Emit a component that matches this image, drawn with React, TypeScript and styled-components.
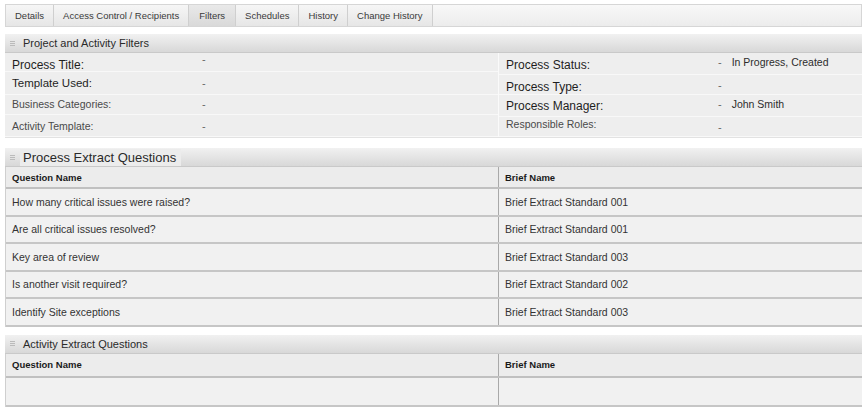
import React from "react";
import styled, { createGlobalStyle } from "styled-components";

const GlobalStyle = createGlobalStyle`
  html, body {
    margin: 0;
    padding: 0;
    background: #ffffff;
    font-family: "Liberation Sans", Arial, sans-serif;
  }
`;

const Page = styled.div`
  width: 863px;
  height: 410px;
  box-sizing: border-box;
  padding: 4px 1px 0 5px;
  display: flex;
  flex-direction: column;
  overflow: hidden;
`;

// Tab strip
const TabBar = styled.div`
  display: flex;
  height: 23px;
  border: 1px solid #d6d6d6;
  background: linear-gradient(#f8f8f8, #ececec);
  box-sizing: border-box;
`;

const Tab = styled.div<{ $active?: boolean }>`
  display: flex;
  align-items: center;
  padding: 0 ${(p) => (p.$active ? "10px" : "9px")};
  font-size: 9.5px;
  color: #3a3a3a;
  border-right: 1px solid #cfcfcf;
  background: ${(p) =>
    p.$active ? "linear-gradient(#e9e9e9, #d9d9d9)" : "linear-gradient(#f6f6f6, #e6e6e6)"};
  white-space: nowrap;
`;

const Section = styled.div<{ $gap: number }>`
  margin-top: ${(p) => p.$gap}px;
  display: flex;
  flex-direction: column;
`;

const SectionHeader = styled.div`
  height: 18px;
  display: flex;
  align-items: center;
  gap: 8px;
  padding-left: 5px;
  background: linear-gradient(#f1f1f1, #d8d8d8);
  border-bottom: 1px solid #c9c9c9;
`;

const HeaderTitle = styled.span<{ $size: number; $lit?: boolean }>`
  font-size: ${(p) => p.$size}px;
  color: #2a2a2a;
  padding: 1px 5px 1px 3px;
  margin-left: -3px;
  background: ${(p) => (p.$lit ? "#ececec" : "transparent")};
`;

const CollapseIcon = () => (
  <svg width="5" height="5" viewBox="0 0 5 5">
    <rect x="0" y="0" width="5" height="1" fill="#bbbbbb" />
    <rect x="0" y="2" width="5" height="1" fill="#bbbbbb" />
    <rect x="0" y="4" width="5" height="1" fill="#bbbbbb" />
  </svg>
);

// Filter block
const FilterGrid = styled.div`
  display: grid;
  grid-template-columns: 493px 1fr;
  background: #eeeeee;
  border-bottom: 1px solid #e2e2e2;
`;

const FilterColumn = styled.div<{ $right?: boolean }>`
  display: flex;
  flex-direction: column;
  border-left: ${(p) => (p.$right ? "1px solid #fafafa" : "none")};
`;

const FilterRow = styled.div<{ $h: number; $cols: number }>`
  height: ${(p) => p.$h}px;
  display: grid;
  grid-template-columns: ${(p) => p.$cols}px 1fr;
  align-items: center;
  padding-left: 7px;
  box-sizing: border-box;
  border-bottom: 1px solid #f8f8f8;
`;

const FilterLabel = styled.span<{ $size: number; $shift: number; $faint?: boolean }>`
  font-size: ${(p) => p.$size}px;
  color: ${(p) => (p.$faint ? "#4a4a4a" : "#1e1e1e")};
  position: relative;
  top: ${(p) => p.$shift}px;
`;

const FilterValue = styled.span<{ $shift: number }>`
  font-size: 11px;
  color: #666;
  display: flex;
  gap: 10px;
  position: relative;
  top: ${(p) => p.$shift}px;
`;

const ValueText = styled.span`
  color: #2c2c2c;
  font-size: 10.5px;
`;

// Tables
const Table = styled.div`
  display: flex;
  flex-direction: column;
  border-left: 1px solid #cfcfcf;
  background: #f1f1f1;
`;

const TableRow = styled.div<{ $h: number; $head?: boolean }>`
  height: ${(p) => p.$h}px;
  display: grid;
  grid-template-columns: 492px 1fr;
  box-sizing: border-box;
  border-bottom: 2px solid ${(p) => (p.$head ? "#c0c0c0" : "#c6c6c6")};
  background: ${(p) => (p.$head ? "#ececec" : "#f1f1f1")};
`;

const Cell = styled.div<{ $head?: boolean }>`
  display: flex;
  align-items: center;
  padding-left: 6px;
  font-size: ${(p) => (p.$head ? "9.5px" : "10.5px")};
  font-weight: ${(p) => (p.$head ? "bold" : "normal")};
  color: ${(p) => (p.$head ? "#1a1a1a" : "#333")};
  & + & {
    border-left: 1px solid #a9a9a9;
  }
`;

const filtersLeft = [
  { label: "Process Title:", size: 12, h: 19, value: "", ls: 3, vs: -3 },
  { label: "Template Used:", size: 11.5, h: 23, value: "", ls: 0, vs: 0 },
  { label: "Business Categories:", size: 10.5, h: 20, value: "", ls: -1, vs: -1 },
  { label: "Activity Template:", size: 10.5, h: 22, value: "", ls: 0, vs: 0 },
];

const filtersRight = [
  { label: "Process Status:", size: 12, h: 22, value: "In Progress, Created", ls: 1, vs: -2 },
  { label: "Process Type:", size: 12, h: 20, value: "", ls: 2, vs: 0 },
  { label: "Process Manager:", size: 12, h: 22, value: "John Smith", ls: 0, vs: -2 },
  { label: "Responsible Roles:", size: 10.5, h: 20, value: "", ls: -3, vs: 0 },
];

const processQuestions = [
  ["How many critical issues were raised?", "Brief Extract Standard 001"],
  ["Are all critical issues resolved?", "Brief Extract Standard 001"],
  ["Key area of review", "Brief Extract Standard 003"],
  ["Is another visit required?", "Brief Extract Standard 002"],
  ["Identify Site exceptions", "Brief Extract Standard 003"],
];

const tabs = ["Details", "Access Control / Recipients", "Filters", "Schedules", "History", "Change History"];

export default function App() {
  return (
    <>
      <GlobalStyle />
      <Page>
        <TabBar>
          {tabs.map((t) => (
            <Tab key={t} $active={t === "Filters"}>
              {t}
            </Tab>
          ))}
        </TabBar>

        <Section $gap={7}>
          <SectionHeader>
            <CollapseIcon />
            <HeaderTitle $size={11}>Project and Activity Filters</HeaderTitle>
          </SectionHeader>
          <FilterGrid>
            <FilterColumn>
              {filtersLeft.map((f) => (
                <FilterRow key={f.label} $h={f.h} $cols={190}>
                  <FilterLabel $size={f.size} $shift={f.ls} $faint={f.size < 11}>
                    {f.label}
                  </FilterLabel>
                  <FilterValue $shift={f.vs}>-</FilterValue>
                </FilterRow>
              ))}
            </FilterColumn>
            <FilterColumn $right>
              {filtersRight.map((f) => (
                <FilterRow key={f.label} $h={f.h} $cols={212}>
                  <FilterLabel $size={f.size} $shift={f.ls} $faint={f.size < 11}>
                    {f.label}
                  </FilterLabel>
                  <FilterValue $shift={f.vs}>
                    -{f.value && <ValueText>{f.value}</ValueText>}
                  </FilterValue>
                </FilterRow>
              ))}
            </FilterColumn>
          </FilterGrid>
        </Section>

        <Section $gap={10}>
          <SectionHeader>
            <CollapseIcon />
            <HeaderTitle $size={13} $lit>
              Process Extract Questions
            </HeaderTitle>
          </SectionHeader>
          <Table>
            <TableRow $h={22} $head>
              <Cell $head>Question Name</Cell>
              <Cell $head>Brief Name</Cell>
            </TableRow>
            {processQuestions.map(([q, b]) => (
              <TableRow key={q} $h={27.5}>
                <Cell>{q}</Cell>
                <Cell>{b}</Cell>
              </TableRow>
            ))}
          </Table>
        </Section>

        <Section $gap={8}>
          <SectionHeader>
            <CollapseIcon />
            <HeaderTitle $size={11}>Activity Extract Questions</HeaderTitle>
          </SectionHeader>
          <Table>
            <TableRow $h={24} $head>
              <Cell $head>Question Name</Cell>
              <Cell $head>Brief Name</Cell>
            </TableRow>
            <TableRow $h={29}>
              <Cell />
              <Cell />
            </TableRow>
          </Table>
        </Section>
      </Page>
    </>
  );
}
